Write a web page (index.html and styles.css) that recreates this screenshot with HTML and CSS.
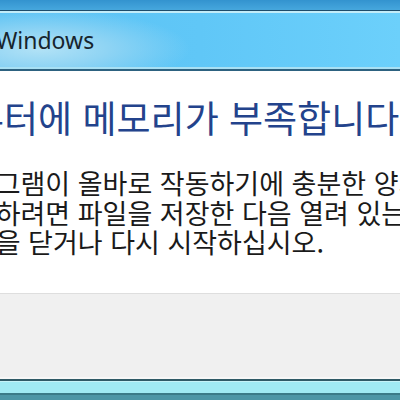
FILE: index.html
```html
<!DOCTYPE html>
<html lang="ko">
<head>
<meta charset="utf-8">
<title>Microsoft Windows</title>
<link rel="stylesheet" href="styles.css">
</head>
<body>
<div class="screen">
  <div class="frame-top"></div>
  <header class="titlebar">
    <span class="title">Microsoft Windows</span>
  </header>
  <main class="content">
    <h1 class="instruction">컴퓨터에 메모리가 부족합니다.</h1>
    <p class="message">
      <span class="line">프로그램이 올바로 작동하기에 충분한 양의</span>
      <span class="line">확보하려면 파일을 저장한 다음 열려 있는</span>
      <span class="line">앱들을 닫거나 다시 시작하십시오.</span>
    </p>
  </main>
  <footer class="footer"></footer>
  <div class="frame-bottom"></div>
</div>
</body>
</html>
```

FILE: styles.css
```css
html, body {
  margin: 0;
  width: 400px;
  height: 400px;
  overflow: hidden;
  background: #ffffff;
}

body {
  font-family: "Noto Sans CJK KR", "Noto Sans", sans-serif;
}

.screen {
  display: flex;
  flex-direction: column;
  height: 400px;
  overflow: hidden;
}

/* glass frame above the caption */
.frame-top {
  height: 10px;
  flex: none;
  background: linear-gradient(#3393cf, #46a7dd);
}

.titlebar {
  flex: none;
  height: 58px;
  display: flex;
  align-items: center;
  overflow: hidden;
  border-top: 1px solid #1d4c6a;
  border-bottom: 2px solid #2d6280;
  box-shadow: inset 0 2px 0 #c2ecf9, inset 0 -2px 0 #a8e0f4;
  background:
    radial-gradient(ellipse 150px 40px at 40px 38px, #b2e2f6 0%, #8fd4f4 45%, rgba(94, 198, 247, 0) 100%),
    linear-gradient(90deg, #5ac2f4, #60c7f7 50%, #6cd0fb);
}

.title {
  font-family: "Noto Sans", "Open Sans", sans-serif;
  font-size: 23px;
  line-height: 1;
  color: #17252e;
  white-space: nowrap;
  margin-left: -112px;
}

.content {
  flex: 1;
  display: flex;
  flex-direction: column;
  padding-top: 26px;
  overflow: hidden;
}

.instruction {
  margin: 0 0 0 -64px;
  font-size: 37px;
  font-weight: normal;
  line-height: 40px;
  color: #23438c;
  white-space: nowrap;
}

.message {
  margin: 31px 0 0 -54px;
  font-size: 27px;
  line-height: 29.5px;
  color: #1a1a1a;
  white-space: nowrap;
}

.line {
  display: block;
}

.footer {
  flex: none;
  height: 83px;
  border-top: 1px solid #dedede;
  background: #f0f0f0;
}

/* dialog edge and the bar beneath it */
.frame-bottom {
  flex: none;
  height: 23px;
  background: linear-gradient(to bottom,
    #f7f7f7 0 2px,
    #2f5a66 2px 4px,
    #c5f3f8 4px 5px,
    #a0eaf3 5px 16px,
    #3b7b88 16px 18px,
    #4d96a6 18px);
}
```
